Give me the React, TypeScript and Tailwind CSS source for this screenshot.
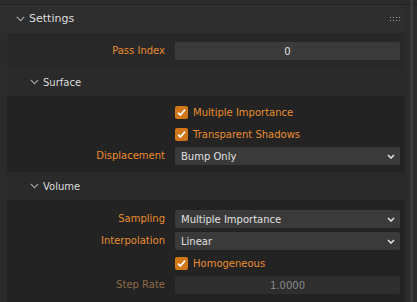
import React from "react";

const font = { fontFamily: '"DejaVu Sans", sans-serif' };

function Chevron({ className = "" }: { className?: string }) {
  return (
    <svg width="9" height="6" viewBox="0 0 9 6" className={className}>
      <path d="M0.8 0.8 L4.5 4.6 L8.2 0.8" fill="none" stroke="#a8a8a8" strokeWidth="1.1" />
    </svg>
  );
}

function DropChevron() {
  return (
    <svg width="8" height="5" viewBox="0 0 8 5">
      <path d="M1 1 L4 4 L7 1" fill="none" stroke="#e6e6e6" strokeWidth="1.5" />
    </svg>
  );
}

function Check() {
  return (
    <div className="w-[13px] h-[13px] rounded-[2px] bg-[#d27718] flex items-center justify-center">
      <svg width="11" height="11" viewBox="0 0 11 11">
        <path d="M2 5.6 L4.4 8 L9 2.6" fill="none" stroke="#ffffff" strokeWidth="1.7" />
      </svg>
    </div>
  );
}

function Row({ label, children, dim = false }: { label?: string; children: React.ReactNode; dim?: boolean }) {
  return (
    <div className="flex items-center h-[18px]">
      <div
        className={`w-[158px] text-right text-[10px] leading-none ${dim ? "text-[#8c6a47]" : "text-[#e98d2e]"}`}
      >
        {label}
      </div>
      <div className="ml-[10px] w-[225px] h-[18px] flex items-center">{children}</div>
    </div>
  );
}

function Field({ value, dim = false }: { value: string; dim?: boolean }) {
  return (
    <div
      className={`w-full h-full rounded-[2px] flex items-center justify-center text-[10px] ${
        dim ? "bg-[#2e2e2e] text-[#888888]" : "bg-[#3a3a3a] text-[#e0e0e0]"
      }`}
    >
      {value}
    </div>
  );
}

function Dropdown({ value }: { value: string }) {
  return (
    <div className="w-full h-full rounded-[2px] bg-[#3a3a3a] flex items-center justify-between pl-[6px] pr-[5px] text-[10px] text-[#e0e0e0]">
      <span>{value}</span>
      <DropChevron />
    </div>
  );
}

function CheckRow({ label }: { label: string }) {
  return (
    <Row>
      <div className="flex items-center">
        <Check />
        <span className="ml-[5px] text-[10px] text-[#e98d2e]">{label}</span>
      </div>
    </Row>
  );
}

function SubHeader({ title }: { title: string }) {
  return (
    <div className="h-[28px] bg-[#2a2a2a] flex items-center">
      <div className="ml-[23px] flex items-center">
        <Chevron />
      </div>
      <span className="ml-[4px] text-[10px] text-[#dcdcdc]">{title}</span>
    </div>
  );
}

export default function App() {
  return (
    <div className="w-[417px] h-[302px] bg-[#2b2b2b] overflow-hidden relative" style={font}>
      <div className="h-[4px] bg-[#2b2b2b]" />
      <div className="h-[1px] bg-[#222222]" />
      <div className="flex">
        <div className="w-[405px]">
          {/* Settings header */}
          <div className="h-[28px] bg-[#2e2e2e] flex items-center">
            <div className="ml-[16px] flex items-center">
              <Chevron />
            </div>
            <span className="ml-[4px] text-[11px] text-[#dedede]">Settings</span>
            <div className="ml-auto mr-[5px] grid grid-cols-4 gap-x-[2px] gap-y-[2px]">
              {Array.from({ length: 8 }).map((_, i) => (
                <div key={i} className="w-[1px] h-[1px] bg-[#9a9a9a]" />
              ))}
            </div>
          </div>
          <div className="flex">
            <div className="w-[7px] bg-[#2b2b2b]" />
            <div className="flex-1">
              <div className="bg-[#282828] pt-[9px] pb-[8px]">
                <Row label="Pass Index">
                  <Field value="0" />
                </Row>
              </div>
              <SubHeader title="Surface" />
              <div className="bg-[#232323] pt-[7px] pb-[7px] flex flex-col gap-[4px]">
                <CheckRow label="Multiple Importance" />
                <CheckRow label="Transparent Shadows" />
                <Row label="Displacement">
                  <Dropdown value="Bump Only" />
                </Row>
              </div>
              <SubHeader title="Volume" />
              <div className="bg-[#232323] pt-[10px] pb-[20px] flex flex-col gap-[4px]">
                <Row label="Sampling">
                  <Dropdown value="Multiple Importance" />
                </Row>
                <Row label="Interpolation">
                  <Dropdown value="Linear" />
                </Row>
                <CheckRow label="Homogeneous" />
                <Row label="Step Rate" dim>
                  <Field value="1.0000" dim />
                </Row>
              </div>
            </div>
          </div>
        </div>
        <div className="w-[12px]" />
      </div>
      <div className="absolute top-0 left-[410px] w-[3px] h-[302px] bg-[#3a3a3a]" />
    </div>
  );
}
